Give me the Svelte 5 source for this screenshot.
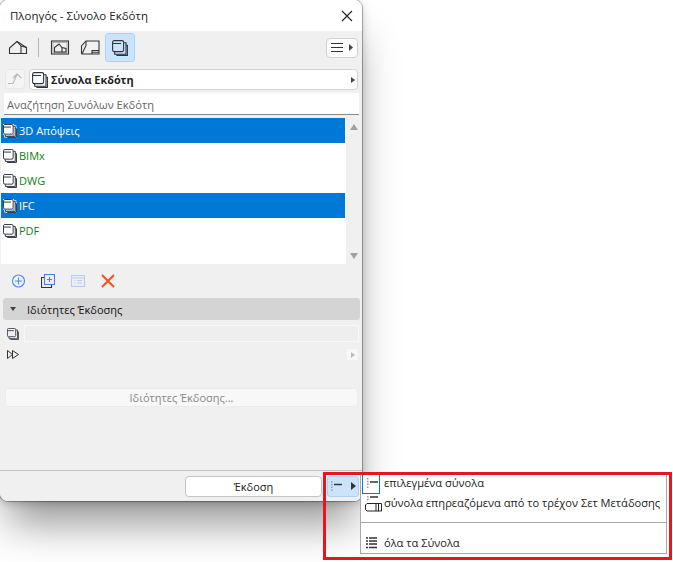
<script>
	const sets = [
		{ name: '3D Απόψεις', selected: true },
		{ name: 'BIMx', selected: false },
		{ name: 'DWG', selected: false },
		{ name: 'IFC', selected: true },
		{ name: 'PDF', selected: false }
	];
</script>

{#snippet sheets()}
	<path d="M5 14.200v1.200h10.400V5.200H14" />
	<path d="M2.700 12v2.200H14V2.700h-2.200" />
	<rect x=".6" y=".6" width="11" height="11" rx="1.500" />
	<path d="M.6 3.500h8.500" />
{/snippet}

{#snippet stack(size, halo = false)}
	<svg width={size} height={size} viewBox="0 0 16 16" fill="none" stroke-width="1.100">
		{#if halo}
			<g stroke="#fff" stroke-width="2.400">{@render sheets()}</g>
			<rect x=".6" y=".6" width="11" height="11" rx="1.500" fill="#fff" stroke="none" />
		{/if}
		<g stroke="#2c3440">{@render sheets()}</g>
	</svg>
{/snippet}

<div class="stage">
	<section class="window">
		<header class="title">
			<span>Πλοηγός - Σύνολο Εκδότη</span>
			<svg class="close" width="12" height="12" viewBox="0 0 12 12" stroke="#222" stroke-width="1.100">
				<path d="M1 1l10 10M11 1L1 11" />
			</svg>
		</header>

		<div class="panel">
			<div class="tabs">
				<button class="tab" aria-label="Χάρτης Έργου">
					<svg width="20" height="15" viewBox="0 0 20 15" fill="none" stroke="#333" stroke-width="1.100">
						<path d="M1.500 13.500V8L9 1.500l9.500 6v6z" />
						<path d="M9 1.500l4 4.500v7.500M13 6l5.500 1.500" />
					</svg>
				</button>
				<span class="divider"></span>
				<button class="tab" aria-label="Σύνολο Προβολών">
					<svg width="20" height="15" viewBox="0 0 20 15" fill="none" stroke="#333" stroke-width="1.100">
						<rect x="1.500" y="1" width="17" height="13" />
						<rect x="3" y="2.500" width="14" height="10" stroke="#888" stroke-width=".6" />
						<path d="M4.500 12V7.500L9 4l3 3.500 4 1v3.500z" />
						<path d="M12 7.500V12" />
					</svg>
				</button>
				<button class="tab" aria-label="Βιβλίο Layout">
					<svg width="20" height="15" viewBox="0 0 20 15" fill="none" stroke="#333" stroke-width="1.100">
						<path d="M6 1h13v13H2L1.500 13V6z" />
						<path d="M6 1v4.500L2 14M12 14v-3.500h7M12 12.300h7" />
					</svg>
				</button>
				<button class="tab active" aria-label="Σύνολα Εκδότη">{@render stack(16)}</button>
				<button class="menu-btn" aria-label="Μενού">
					<svg width="22" height="9" viewBox="0 0 22 9">
						<path d="M0 .5h12M0 4.500h12M0 8.500h12" stroke="#333" />
						<path d="M18 1l4 3.500-4 3.500z" fill="#444" />
					</svg>
				</button>
			</div>

			<div class="path-row">
				<button class="up" aria-label="Πάνω">
					<svg width="15" height="12" viewBox="0 0 15 12" fill="none" stroke="#b8b8b8" stroke-width="1.100">
						<path d="M0 10.500h5L9 1.500M5 5l4-4 4.500 4" />
					</svg>
				</button>
				<div class="path">
					{@render stack(16)}
					<b>Σύνολα Εκδότη</b>
					<i class="caret"></i>
				</div>
			</div>

			<div class="search">Αναζήτηση Συνόλων Εκδότη</div>

			<div class="list-wrap">
				<ul class="list">
					{#each sets as item}
						<li class:selected={item.selected}>
							{@render stack(14, item.selected)}
							<span>{item.name}</span>
						</li>
					{/each}
				</ul>
				<div class="scroll">
					<i class="arrow up-arrow"></i>
					<i class="arrow down-arrow"></i>
				</div>
			</div>

			<div class="actions">
				<svg width="14" height="14" viewBox="0 0 14 14" fill="none" stroke="#4a8cf0" stroke-width="1.100">
					<circle cx="7.500" cy="7" r="6" />
					<path d="M7.500 3.500v7M4 7h7" />
				</svg>
				<svg width="14" height="14" viewBox="0 0 14 14" fill="none" stroke-width="1.100">
					<path d="M3.500 3.500H.5v10h10v-3" stroke="#2c3440" />
					<rect x="3.500" y=".5" width="10" height="10" stroke="#3f86ee" />
					<path d="M8.500 3v5M6 5.500h5" stroke="#3f86ee" />
				</svg>
				<svg width="14" height="12" viewBox="0 0 14 12" fill="none" stroke="#b3cdf3" stroke-width="1.100">
					<rect x=".5" y=".5" width="13" height="11" />
					<path d="M.5 3h13M3.500 5.500h1M6 5.500h5M3.500 8h1M6 8h5" />
				</svg>
				<svg width="14" height="14" viewBox="0 0 14 14" stroke="#f4511e" stroke-width="2">
					<path d="M1 1l12 12M13 1L1 13" />
				</svg>
			</div>

			<div class="section-head"><i class="section-caret"></i>Ιδιότητες Έκδοσης</div>

			<div class="prop-row">
				{@render stack(12)}
				<div class="prop-field"></div>
			</div>
			<div class="prop-row second">
				<svg width="12" height="9" viewBox="0 0 12 9" fill="none" stroke="#333" stroke-width="1">
					<path d="M.5.5v8l5-4zM5.500.5v8l6-4-6-4" />
				</svg>
				<span class="mini"><i></i></span>
			</div>

			<button class="props-btn">Ιδιότητες Έκδοσης...</button>

			<div class="spacer"></div>

			<footer class="footer">
				<button class="publish">Έκδοση</button>
				<button class="scope" aria-label="Εύρος">
					<svg width="11" height="11" viewBox="0 0 11 11">
						<path d="M.75 0v11" stroke="#999" stroke-width="1.500" stroke-dasharray="1.500 1.300" />
						<path d="M3 3.500h8" stroke="#333" stroke-width="1.500" />
					</svg>
					<svg width="5" height="8" viewBox="0 0 5 8"><path d="M0 0l5 4-5 4z" fill="#333" /></svg>
				</button>
			</footer>
		</div>
	</section>

	<div class="popup">
		<div class="item first">
			<span class="ico boxed">
				<svg width="16" height="16" viewBox="0 0 16 16">
					<path d="M4.750 3v11" stroke="#999" stroke-width="1.500" stroke-dasharray="1.500 1.300" />
					<path d="M7 7h8" stroke="#333" stroke-width="1.500" />
				</svg>
			</span>
			<span class="label">επιλεγμένα σύνολα</span>
		</div>
		<div class="item second-item">
			<span class="ico wide">
				<svg width="17" height="17" viewBox="0 0 17 17" fill="none">
					<path d="M2.750 1v5" stroke="#999" stroke-width="1.500" stroke-dasharray="1.500 1.300" />
					<path d="M5 2h8" stroke="#333" stroke-width="1.500" />
					<path d="M2 8.500h14.500V16H2L.5 14.500V10zM11 8.500V16M13.500 8.500V16" stroke="#222" />
				</svg>
			</span>
			<span class="label">σύνολα επηρεαζόμενα από το τρέχον Σετ Μετάδοσης</span>
		</div>
		<hr />
		<div class="item">
			<span class="ico">
				<svg width="12" height="12" viewBox="0 0 12 12">
					<path d="M1 1h2M1 4h2M1 7h2M1 10.500h2" stroke="#333" stroke-width="1.600" />
					<path d="M4 1h8M4 4h8M4 7h8M4 10.500h8" stroke="#333" stroke-width="1.600" />
				</svg>
			</span>
			<span class="label">όλα τα Σύνολα</span>
		</div>
	</div>

	<div class="callout"></div>
</div>

<style>
	:global(body) { margin: 0; background: #fff; }
	.stage { position: relative; width: 673px; height: 562px; overflow: hidden; font-family: "Open Sans", "Noto Sans", sans-serif; font-size: 11px; color: #222; }
	button { font: inherit; padding: 0; cursor: default; color: inherit; }
	i { display: block; }

	.window { width: 362px; height: 501px; display: flex; flex-direction: column; border-radius: 8px; overflow: hidden; box-shadow: 0 30px 40px -8px rgba(0, 0, 0, 0.42), 0 2px 8px rgba(0, 0, 0, 0.22), 0 0 0 1px rgba(0, 0, 0, 0.28); }
	.title { height: 31px; flex: none; box-sizing: border-box; background: #fff; display: flex; align-items: center; justify-content: space-between; padding: 0 9px 0 10px; font-size: 11.500px; }
	.panel { flex: 1; background: #f0f0f0; display: flex; flex-direction: column; }

	.tabs { height: 33px; flex: none; display: flex; align-items: center; padding: 0 4px 2px 3px; }
	.tab { width: 30px; height: 29px; border: 1px solid transparent; background: none; border-radius: 3px; display: flex; align-items: center; justify-content: center; }
	.tab.active { background: #cce4fb; border-color: #a8d3f7; }
	.divider { width: 1px; height: 19px; background: #b4b4b4; margin: 0 6px 0 5px; }
	.menu-btn { margin-left: auto; width: 32px; height: 20px; background: #fdfdfd; border: 1px solid #d0d0d0; border-radius: 4px; display: flex; align-items: center; justify-content: center; }

	.path-row { height: 21px; margin-top: 3px; display: flex; gap: 4px; padding: 0 4px 0 5px; }
	.up { width: 20px; height: 20px; background: #f5f5f5; border: 1px solid #e8e8e8; border-radius: 3px; display: flex; align-items: center; justify-content: center; }
	.path { flex: 1; height: 19px; background: #fff; border: 1px solid #d4d4d4; border-radius: 4px; display: flex; align-items: center; gap: 3px; padding: 0 2px 0 2px; font-size: 10.900px; }
	.caret { margin-left: auto; width: 0; height: 0; border-left: 4px solid #444; border-top: 3.500px solid transparent; border-bottom: 3.500px solid transparent; }

	.search { height: 22px; margin: 3px 3px 0 4px; background: #fff; border-bottom: 1px solid #8a8a8a; padding-left: 3px; line-height: 23px; color: #666; box-sizing: border-box; font-size: 11.100px; }

	.list-wrap { height: 146px; flex: none; margin-top: 3px; display: flex; padding-left: 1px; }
	.list { width: 345px; margin: 0; padding: 0; list-style: none; background: #fff; }
	.list li { height: 25px; margin-right: 1px; display: flex; align-items: center; gap: 2px; padding-left: 2px; color: #108010; }
	.list li.selected { background: #0078d7; color: #fff; }
	.scroll { flex: 1; padding: 6px 0 5px; display: flex; flex-direction: column; justify-content: space-between; align-items: center; }
	.arrow { width: 0; height: 0; border-left: 4.500px solid transparent; border-right: 4.500px solid transparent; }
	.up-arrow { border-bottom: 6px solid #a0a0a0; }
	.down-arrow { border-top: 6px solid #a0a0a0; }

	.actions { height: 34px; flex: none; display: flex; align-items: center; gap: 16px; padding-left: 11px; }

	.section-head { height: 22px; flex: none; margin: 0 2px 0 3px; background: #d4d4d4; border-radius: 3px; display: flex; align-items: center; color: #111; padding-left: 7px; gap: 11px; }
	.section-caret { width: 0; height: 0; border-left: 3.500px solid transparent; border-right: 3.500px solid transparent; border-top: 4px solid #444; }

	.prop-row { display: flex; align-items: center; gap: 5px; padding: 0 3px 0 7px; height: 17px; margin-top: 5px; }
	.prop-field { flex: 1; height: 17px; background: #eeeeee; border: 1px solid #f8f8f8; box-sizing: border-box; }
	.prop-row.second { justify-content: space-between; margin-top: 4px; padding-right: 4px; }
	.mini { width: 11px; height: 11px; background: #f8f8f8; border-radius: 2px; display: flex; align-items: center; justify-content: center; }
	.mini i { width: 0; height: 0; border-left: 4px solid #bbb; border-top: 3px solid transparent; border-bottom: 3px solid transparent; }

	.props-btn { margin: 25px 4px 0 5px; height: 19px; line-height: 17px; background: #f8f8f8; border: 1px solid #ececec; border-radius: 3px; color: #888; flex: none; }
	.spacer { flex: 1; }

	.footer { height: 31px; flex: none; box-sizing: border-box; border-top: 1px solid #c4c4c4; display: flex; align-items: center; justify-content: flex-end; gap: 5px; padding-right: 3px; }
	.publish { width: 137px; height: 21px; background: #fff; border: 1px solid #c4c4c4; border-radius: 4px; }
	.scope { width: 32px; height: 21px; background: #cce4fb; border: 1px solid #a8d3f7; border-radius: 3px; display: flex; align-items: center; justify-content: center; gap: 9px; }

	.popup { position: absolute; left: 360px; top: 472px; width: 307px; height: 82px; box-sizing: border-box; background: #fff; border: 1px solid #a8a8a8; border-top: none; display: flex; flex-direction: column; font-size: 11.100px; }
	.item { height: 22px; flex: none; display: flex; align-items: center; gap: 4px; padding-left: 1px; }
	.item.second-item { height: 19px; }
	.label { padding-bottom: 2px; }
	.ico { width: 18px; height: 21px; display: flex; align-items: center; justify-content: center; box-sizing: border-box; border: 1px solid transparent; border-top: none; flex: none; }
	.ico.boxed { border-color: #0078d7; }
	.ico.wide { justify-content: flex-start; }
	.ico.wide svg { flex: none; margin-left: 2px; }
	.popup hr { width: 100%; margin: 9px 0; border: none; border-top: 1px solid #a8a8a8; }

	.callout { position: absolute; left: 323px; top: 472px; width: 349px; height: 88px; box-sizing: border-box; border: 3px solid #e8141e; pointer-events: none; }
</style>
